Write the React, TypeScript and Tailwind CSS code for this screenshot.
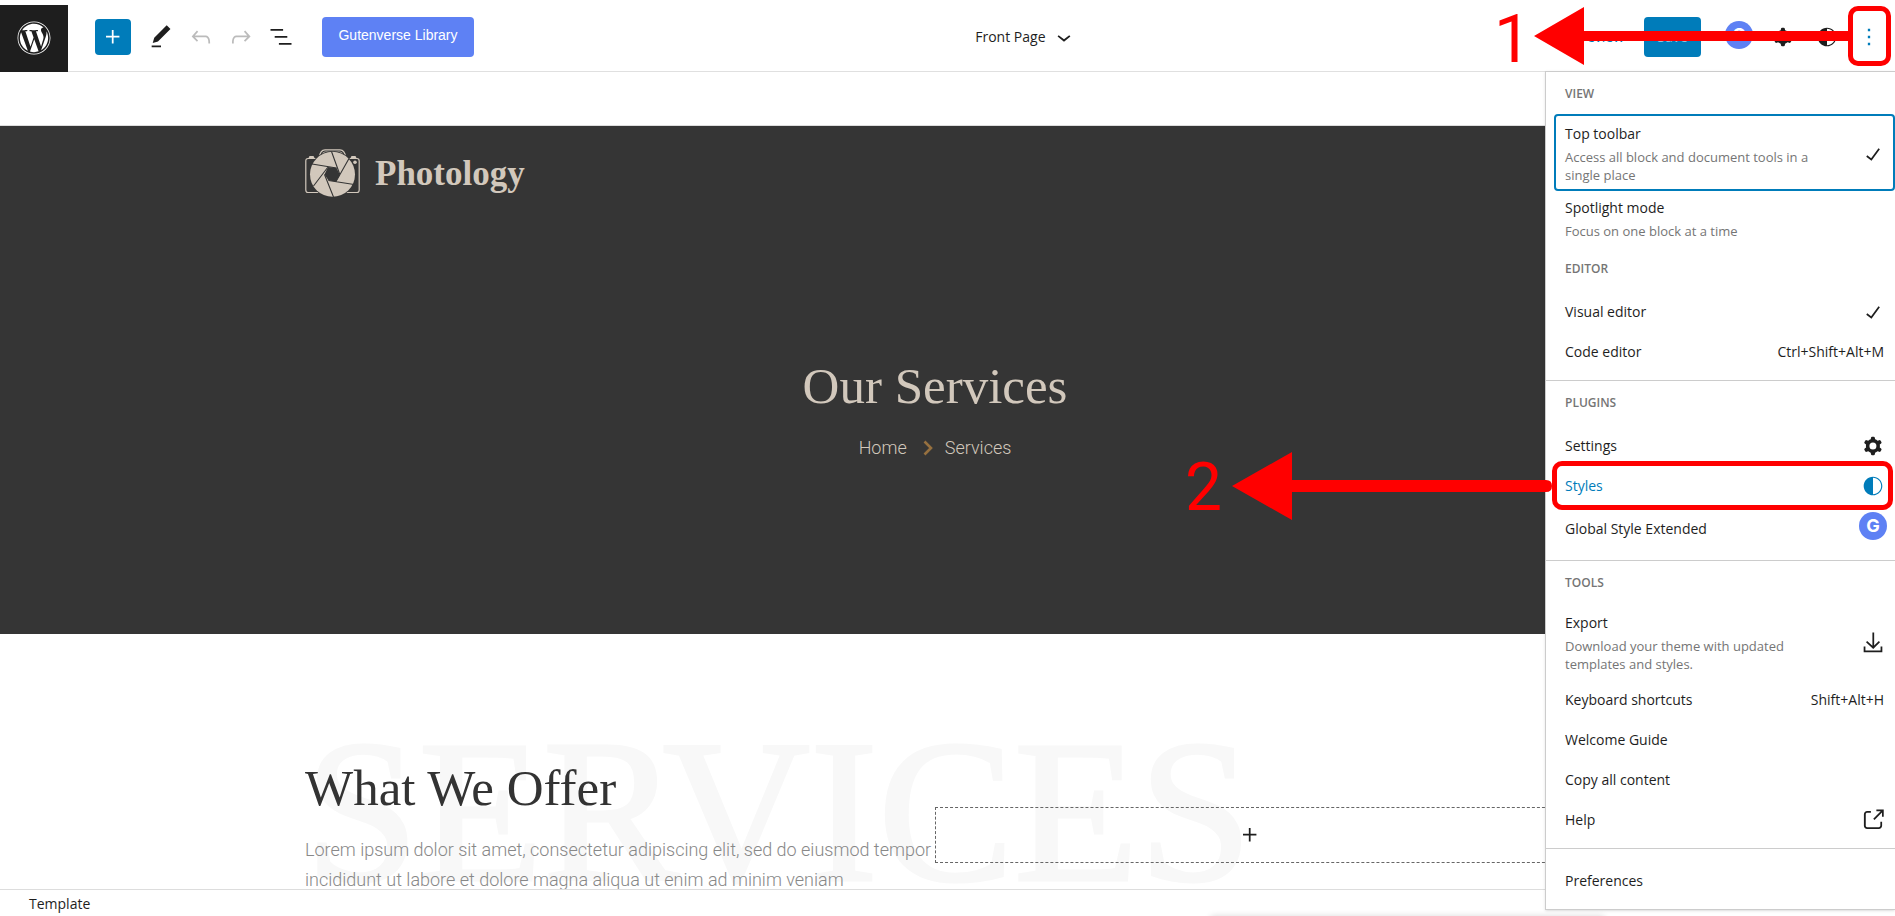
import type { ReactNode } from "react";
import { FaWordpress } from "react-icons/fa";

const icons = {
  plus: "M11 12.5V17.5H12.5V12.5H17.5V11H12.5V6H11V11H6V12.5H11Z",
  edit: "M20.1 5.1L16.9 2 6.2 12.7l-1.3 4.4 4.5-1.3L20.1 5.1zM4 20.8h8v-1.5H4v1.5z",
  undo: "M18.3 11.7c-.6-.6-1.4-.9-2.3-.9H6.7l2.9-3.3-1.1-1-4.5 5L8.5 16l1-1-2.7-2.7H16c.5 0 .9.2 1.3.5 1 1 1 3.4 1 4.5v.3h1.5v-.2c0-1.5 0-4.3-1.5-5.7z",
  redo: "M15.6 6.5l-1.1 1 2.9 3.3H8c-.9 0-1.7.3-2.3.9-1.4 1.5-1.4 4.2-1.4 5.6v.2h1.5v-.3c0-1.1 0-3.5 1-4.5.3-.3.7-.5 1.3-.5h9.2L14.5 15l1.1 1.1 4.6-4.6-4.6-5z",
  listView: "M13.8 5.2H3v1.5h10.8V5.2zm-3.6 12v1.5H21v-1.5H10.2zm7.2-6H6.6v1.5h10.8v-1.5z",
  chevronDown: "M17.5 11.6L12 16l-5.5-4.4.9-1.2L12 14l4.5-3.6 1 1.2z",
  check: "M16.7 7.1l-6.3 8.5-3.3-2.5-.9 1.2 4.5 3.4L17.9 8z",
  more: "M13 19h-2v-2h2v2zm0-6h-2v-2h2v2zm0-6h-2V5h2v2z",
  cog: "M10.289 4.836A1 1 0 0111.275 4h1.306a1 1 0 01.987.836l.244 1.466c.787.26 1.503.679 2.108 1.218l1.393-.522a1 1 0 011.216.437l.653 1.13a1 1 0 01-.23 1.273l-1.148.944a6.025 6.025 0 010 2.435l1.149.946a1 1 0 01.23 1.272l-.653 1.13a1 1 0 01-1.216.437l-1.394-.522c-.605.54-1.32.958-2.108 1.218l-.244 1.466a1 1 0 01-.987.836h-1.306a1 1 0 01-.986-.836l-.244-1.466a5.995 5.995 0 01-2.108-1.218l-1.394.522a1 1 0 01-1.217-.436l-.653-1.131a1 1 0 01.23-1.272l1.149-.946a6.026 6.026 0 010-2.435l-1.148-.944a1 1 0 01-.23-1.272l.653-1.131a1 1 0 011.217-.437l1.393.522a5.994 5.994 0 012.108-1.218l.244-1.466zM14.929 12a3 3 0 11-6 0 3 3 0 016 0z",
  styles: "M12 4c-4.4 0-8 3.6-8 8s3.6 8 8 8 8-3.6 8-8-3.6-8-8-8zm0 15V5c3.9 0 7 3.1 7 7s-3.1 7-7 7z",
  download: "M18 11.3l-1-1.1-4 4V3h-1.5v11.3L7 10.2l-1 1.1 6.2 5.8 5.8-5.8zm.5 3.7v3.5h-13V15H4v5h16v-5h-1.5z",
  external: "M18.2 17c0 .7-.6 1.2-1.2 1.2H7c-.7 0-1.2-.6-1.2-1.2V7c0-.7.6-1.2 1.2-1.2h3.2V4.2H7C5.5 4.2 4.2 5.5 4.2 7v10c0 1.5 1.2 2.8 2.8 2.8h10c1.5 0 2.8-1.2 2.8-2.8v-3.6h-1.5V17zM14.9 3v1.5h3.7l-6.4 6.4 1.1 1.1 6.4-6.4v3.7h1.5V3h-6.3z",
};

const Icon = ({ name }: { name: keyof typeof icons }) => (
  <svg viewBox="0 0 24 24" className="size-7 shrink-0" fill="currentColor" fillRule="evenodd" aria-hidden="true">
    <path d={icons[name]} />
  </svg>
);

const GutenverseBadge = () => (
  <span className="flex size-7 shrink-0 items-center justify-center rounded-full bg-[#5e81f4] font-['Inter',sans-serif] text-lg font-bold text-white">
    G
  </span>
);

const ToolButton = ({ label, className = "", children }: { label: string; className?: string; children: ReactNode }) => (
  <button type="button" aria-label={label} className={`flex size-9 items-center justify-center ${className}`}>
    {children}
  </button>
);

const Header = () => (
  <header className="flex h-[67px] shrink-0 items-stretch justify-between border-b border-[#e0e0e0] bg-white">
    <div className="flex">
      <a href="#dashboard" aria-label="Dashboard" className="flex h-[67px] w-17 items-center justify-center bg-[#1e1e1e] pb-0.5 text-white">
        <FaWordpress size={34} />
      </a>
      <div className="flex items-center gap-1 pb-[3px] pl-[27px]">
        <ToolButton label="Add block" className="mr-2 rounded-sm bg-[#007cba] text-white"><Icon name="plus" /></ToolButton>
        <ToolButton label="Edit"><Icon name="edit" /></ToolButton>
        <ToolButton label="Undo" className="text-[#bbb]"><Icon name="undo" /></ToolButton>
        <ToolButton label="Redo" className="text-[#bbb]"><Icon name="redo" /></ToolButton>
        <ToolButton label="List view"><Icon name="listView" /></ToolButton>
        <button type="button" className="ml-[19px] h-10 w-38 rounded bg-[#5e81f4] pb-1 font-['Liberation_Sans',Arial,sans-serif] text-sm text-white">
          Gutenverse Library
        </button>
      </div>
    </div>

    <button type="button" className="flex items-center gap-1 pb-[3px] pl-1.5">
      Front Page
      <Icon name="chevronDown" />
    </button>

    <div className="flex items-center pr-2 pb-[3px]">
      <button type="button" className="mr-5 text-[#007cba]">Preview</button>
      <button type="button" className="mr-5 h-10 w-[57px] rounded-sm bg-[#007cba] text-[#8cc4e2]">Save</button>
      <div className="flex items-center gap-2">
        <ToolButton label="Global Style Extended" className="pb-1"><GutenverseBadge /></ToolButton>
        <ToolButton label="Settings"><Icon name="cog" /></ToolButton>
        <ToolButton label="Styles"><Icon name="styles" /></ToolButton>
        <ToolButton label="Options" className="-ml-0.5 text-[#007cba]"><Icon name="more" /></ToolButton>
      </div>
    </div>
  </header>
);

const CameraLogo = () => (
  <svg width="55" height="49" viewBox="0 0 55 49" fill="none" aria-hidden="true">
    <g stroke="#d2c8bc" strokeWidth="1.2">
      <path d="M14 9.5H3Q.8 9.5 .8 12V41Q.8 43.5 3 43.5H14M41 43.5H52Q54.2 43.5 54.2 41V12Q54.2 9.5 52 9.5H41" />
      <path d="M14.5 8C15 3 17 .8 20 .8H35C38 .8 40 3 40.5 8" />
      <path d="M16.8 7C17.5 4 18.5 3 21 3H34C36.5 3 37.5 4 38.2 7" />
    </g>
    <path d="M3.500 9L4.500 7H8.500L9.500 9ZM45.500 9L46.500 7H50.500L51.500 9Z" fill="#d2c8bc" />
    <circle cx="27.5" cy="25.3" r="23.4" fill="#353535" />
    <circle cx="50" cy="13.3" r="1.8" fill="#d2c8bc" />
    <circle cx="27.5" cy="25.3" r="22.5" fill="#d2c8bc" />
    <path d="M23 18L31.5 19L35 26L31 32.5L23.5 31.5L19.5 25.5Z" fill="#353535" />
    <path d="M26.500 2.500L35 26M44 9.500L31 32.500M49 35.500L23.500 31.500M28.500 48L19.500 25.500M8.500 37L23 18M7 15L31.500 19" stroke="#353535" strokeWidth="1.1" />
  </svg>
);

const Canvas = () => (
  <main className="min-h-0 flex-1 overflow-hidden bg-white pt-[53px]">
    <section className="h-[509px] border-t border-[#ddd] bg-[#353535] pr-[25px] text-[#d2c8bc]">
      <div className="mx-auto max-w-[1260px] pt-[23px]">
        <a href="#home" className="flex items-center gap-[15px]">
          <CameraLogo />
          <span className="font-['Liberation_Serif',serif] text-[35px] leading-12 font-bold">Photology</span>
        </a>
        <div className="pt-[158px] text-center">
          <h1 className="font-['Liberation_Serif',serif] text-[51px] leading-15">Our Services</h1>
          <nav aria-label="Breadcrumb" className="mt-[18px] flex items-center justify-center font-['Roboto',sans-serif] text-lg font-light">
            <a href="#home">Home</a>
            <svg width="10" height="16" viewBox="0 0 10 16" fill="none" className="mr-3 ml-4" aria-hidden="true">
              <path d="M1.500 1.500L8 8L1.500 14.500" stroke="#96703f" strokeWidth="2.600" />
            </svg>
            <a href="#services">Services</a>
          </nav>
        </div>
      </div>
    </section>

    <section className="pr-[25px]">
      <div className="relative mx-auto flex max-w-[1260px] items-start pt-31">
        <span
          aria-hidden="true"
          className="absolute top-[75px] left-0 font-['Liberation_Serif',serif] text-[204px] leading-none text-[#f8f8f8] [-webkit-text-stroke:3px_#f8f8f8]"
        >
          SERVICES
        </span>
        <div className="relative w-1/2">
          <h2 className="font-['Liberation_Serif',serif] text-[51px] leading-15 text-[#333]">What We Offer</h2>
          <p className="mt-[17px] font-['Roboto',sans-serif] text-lg leading-[30px] font-light text-[#888]">
            Lorem ipsum dolor sit amet, consectetur adipiscing elit, sed do eiusmod tempor incididunt ut labore et dolore magna aliqua ut enim ad minim veniam
          </p>
        </div>
        <button type="button" aria-label="Add block" className="relative mt-[49px] flex h-14 w-1/2 items-center justify-center border border-dashed border-[#666]">
          <Icon name="plus" />
        </button>
      </div>
    </section>
  </main>
);

interface MenuItemProps {
  title: string;
  info?: string;
  extra?: ReactNode;
  className?: string;
}

const MenuItem = ({ title, info, extra, className = "" }: MenuItemProps) => (
  <button
    type="button"
    role="menuitem"
    className={`flex min-h-10 w-full items-center justify-between pr-2 pl-[11px] text-left ${info ? "pb-[7px]" : ""} ${className}`}
  >
    <span className="max-w-[260px]">
      <span className="block">{title}</span>
      {info && <span className="mt-1 block text-[13px] leading-[18px] text-[#757575]">{info}</span>}
    </span>
    {extra}
  </button>
);

const MenuGroup = ({ label, className = "pb-2", children }: { label?: string; className?: string; children: ReactNode }) => (
  <div role="group" aria-label={label} className={`pt-3 pl-2 ${className}`}>
    {label && <div className="mb-[13px] pl-[11px] text-xs leading-5 font-semibold text-[#757575] uppercase">{label}</div>}
    {children}
  </div>
);

const OptionsMenu = () => (
  <div role="menu" className="absolute top-[71px] right-0 w-[350px] divide-y divide-[#ccc] border-y border-l border-[#ccc] bg-white shadow-sm">
    <div>
      <MenuGroup label="View" className="pb-0">
        <MenuItem
          title="Top toolbar"
          info="Access all block and document tools in a single place"
          extra={<Icon name="check" />}
          className="-mt-[3px] rounded-sm pt-[10px] outline-2 -outline-offset-2 outline-[#007cba]"
        />
        <MenuItem title="Spotlight mode" info="Focus on one block at a time" className="pt-[7px]" />
      </MenuGroup>
      <MenuGroup label="Editor">
        <MenuItem title="Visual editor" extra={<Icon name="check" />} />
        <MenuItem title="Code editor" extra={<span className="pr-[3px]">Ctrl+Shift+Alt+M</span>} />
      </MenuGroup>
    </div>
    <MenuGroup label="Plugins">
      <MenuItem title="Settings" extra={<Icon name="cog" />} />
      <MenuItem title="Styles" extra={<Icon name="styles" />} className="text-[#007cba]" />
      <MenuItem title="Global Style Extended" extra={<span className="pb-1.5"><GutenverseBadge /></span>} className="min-h-[46px]" />
    </MenuGroup>
    <MenuGroup label="Tools">
      <MenuItem
        title="Export"
        info="Download your theme with updated templates and styles."
        extra={<Icon name="download" />}
        className="pt-[7px]"
      />
      <MenuItem title="Keyboard shortcuts" extra={<span className="pr-[3px]">Shift+Alt+H</span>} />
      <MenuItem title="Welcome Guide" />
      <MenuItem title="Copy all content" />
      <MenuItem title="Help" extra={<Icon name="external" />} />
    </MenuGroup>
    <MenuGroup>
      <MenuItem title="Preferences" />
    </MenuGroup>
  </div>
);

// red step markers drawn over the editor
const Annotations = () => (
  <div className="pointer-events-none absolute inset-0 font-['Roboto',sans-serif] text-[66px] leading-none text-[#f00]">
    <span className="absolute top-[7px] right-[364px]">1</span>
    <svg className="absolute top-[7px] right-[47px]" width="314" height="58" viewBox="0 0 314 58" fill="#f00" aria-hidden="true">
      <path d="M0 29L50 0V24H314V34H50V58Z" />
    </svg>
    <div className="absolute top-1.5 right-1 h-15 w-[43px] rounded-[10px] border-5 border-[#f00]" />

    <span className="absolute top-[455px] right-[673px]">2</span>
    <svg className="absolute top-[452px] right-[343px]" width="320" height="68" viewBox="0 0 320 68" fill="#f00" aria-hidden="true">
      <path d="M0 34L60 0V28H314Q320 28 320 34T314 40H60V68Z" />
    </svg>
    <div className="absolute top-[461px] right-0.5 h-[49px] w-[341px] rounded-[10px] border-5 border-[#f00]" />
  </div>
);

const App = () => {
  return (
    <div className="relative flex h-screen flex-col overflow-hidden bg-white pt-[5px] font-['Open_Sans',sans-serif] text-sm text-[#1e1e1e]">
      <Header />
      <Canvas />
      <footer className="flex h-[27px] shrink-0 items-center border-t border-[#ddd] bg-white pt-0.5 pl-[29px]">Template</footer>
      <div className="absolute top-full right-[290px] h-10 w-[395px] rounded shadow-[0_0_6px_rgba(0,0,0,0.15)]" />
      <OptionsMenu />
      <Annotations />
    </div>
  );
};

export default App;
